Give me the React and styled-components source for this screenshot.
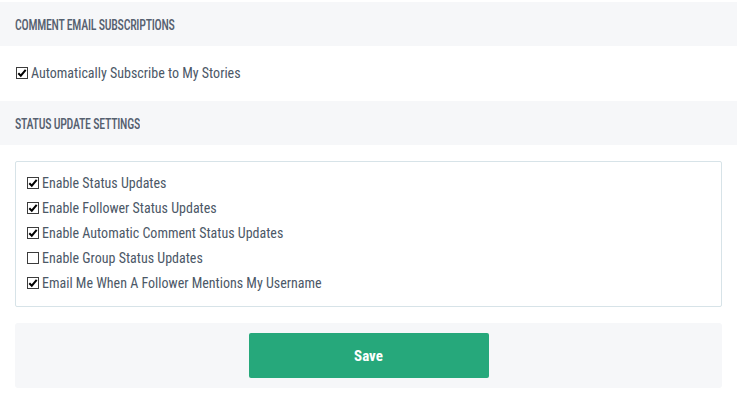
import React from "react";
import styled, { createGlobalStyle } from "styled-components";

const Global = createGlobalStyle`
  html, body { margin: 0; padding: 0; background: #ffffff; }
  body { font-family: "Roboto Condensed", "Liberation Sans Narrow", "DejaVu Sans Condensed", sans-serif; }
`;

const Page = styled.div`
  padding-top: 2px;
  width: 737px;
  display: flex;
  flex-direction: column;
`;

const SectionHeader = styled.div`
  height: 44px;
  background: #f6f7f9;
  display: flex;
  align-items: center;
  padding: 1px 0 0 15px;
  box-sizing: border-box;
`;

const HeaderText = styled.span`
  display: inline-block;
  font-family: "Roboto Condensed", "DejaVu Sans Condensed", sans-serif;
  font-size: 14px;
  font-weight: 500;
  letter-spacing: -0.3px;
  color: #566170;
  text-transform: uppercase;
  transform: scaleX(0.85);
  transform-origin: left center;
  white-space: nowrap;
`;

const PlainRow = styled.div`
  height: 55px;
  box-sizing: border-box;
  display: flex;
  align-items: center;
  padding: 0 16px 2px;
`;

const OptionsBox = styled.div`
  margin: 16px 15px 0 15px;
  border: 1px solid #d7e3e8;
  border-radius: 2px;
  padding: 8px 11px 11px;
  display: flex;
  flex-direction: column;
`;

const OptionRow = styled.label`
  height: 25px;
  display: flex;
  align-items: center;
`;

const Label = styled.div`
  display: flex;
  align-items: center;
  gap: 3px;
  font-size: 14px;
  color: #4c5867;
`;

const BoxMark = styled.span`
  width: 10px;
  height: 10px;
  border: 1px solid #3c3c3c;
  background: #fff;
  display: inline-flex;
  align-items: center;
  justify-content: center;
  flex-shrink: 0;
`;

const Footer = styled.div`
  margin: 16px 15px 0 15px;
  height: 65px;
  background: #f6f7f9;
  border-radius: 3px;
  display: flex;
  align-items: center;
  justify-content: center;
`;

const SaveButton = styled.button`
  width: 240px;
  height: 45px;
  border: none;
  border-radius: 2px;
  background: #26a87b;
  color: #ffffff;
  font-family: "Roboto Condensed", "DejaVu Sans Condensed", sans-serif;
  font-size: 15px;
  font-weight: bold;
  cursor: pointer;
`;

function Check({ checked }) {
  return (
    <BoxMark>
      {checked && (
        <svg width="10" height="10" viewBox="0 0 10 10">
          <path d="M1.3 5.2 L3.8 7.7 L8.7 1.9" fill="none" stroke="#000" strokeWidth="2" />
        </svg>
      )}
    </BoxMark>
  );
}

function Option({ checked, children }) {
  return (
    <Label>
      <Check checked={checked} />
      <span>{children}</span>
    </Label>
  );
}

const options = [
  ["Enable Status Updates", true],
  ["Enable Follower Status Updates", true],
  ["Enable Automatic Comment Status Updates", true],
  ["Enable Group Status Updates", false],
  ["Email Me When A Follower Mentions My Username", true],
];

export default function App() {
  return (
    <>
      <Global />
      <Page>
        <SectionHeader>
          <HeaderText>Comment Email Subscriptions</HeaderText>
        </SectionHeader>
        <PlainRow>
          <Option checked>Automatically Subscribe to My Stories</Option>
        </PlainRow>
        <SectionHeader>
          <HeaderText>Status Update Settings</HeaderText>
        </SectionHeader>
        <OptionsBox>
          {options.map(([text, checked]) => (
            <OptionRow key={text}>
              <Option checked={checked}>{text}</Option>
            </OptionRow>
          ))}
        </OptionsBox>
        <Footer>
          <SaveButton>Save</SaveButton>
        </Footer>
      </Page>
    </>
  );
}
